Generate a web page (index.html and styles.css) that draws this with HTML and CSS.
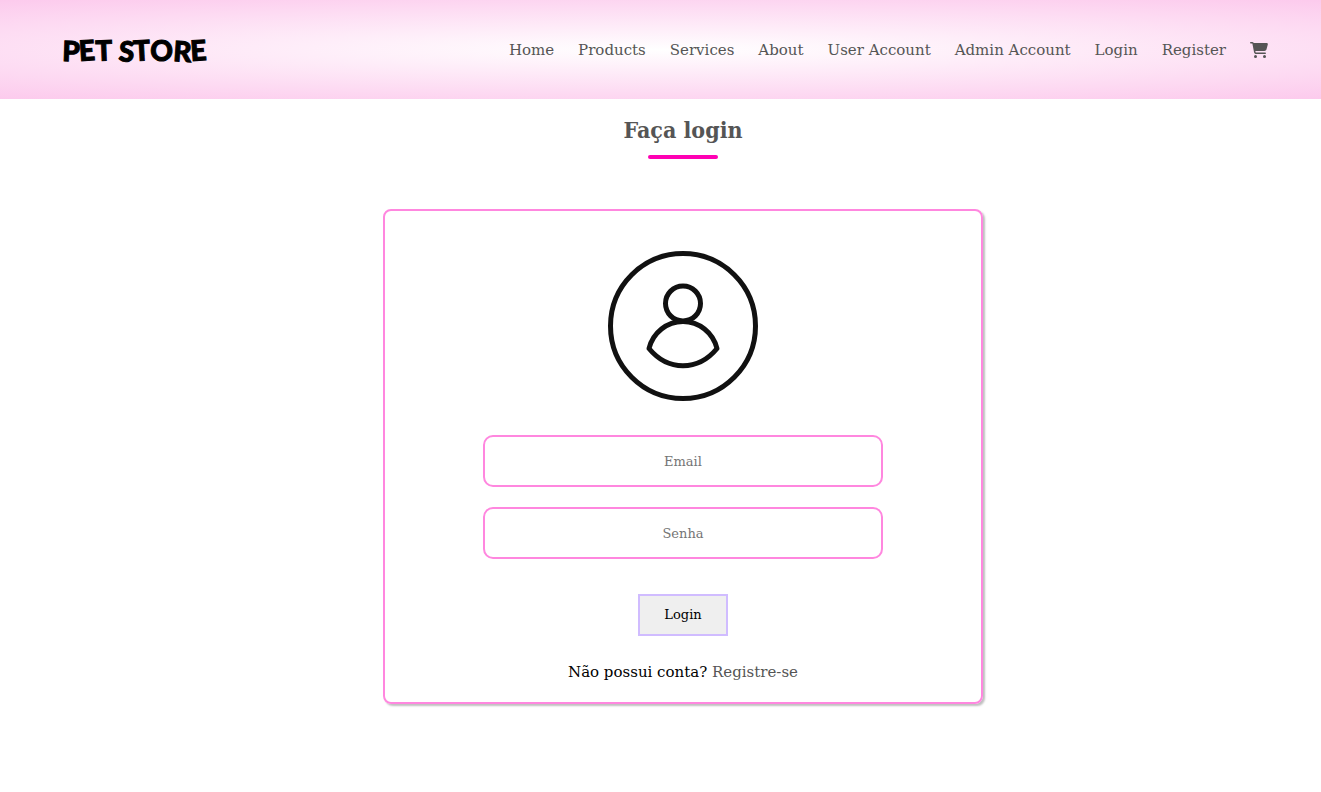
FILE: index.html
```html
<!DOCTYPE html>
<html lang="pt-BR">
<head>
<meta charset="utf-8">
<meta name="viewport" content="width=device-width, initial-scale=1">
<title>Pet Store</title>
<link rel="stylesheet" href="styles.css">
</head>
<body>
<header class="header">
  <a class="logo" href="#" aria-label="PET STORE">
    <svg width="150" height="40" viewBox="0 0 150 40" aria-hidden="true">
      <text class="logo-text" x="1" y="31" rotate="2 -4 -2 0 4 -3 0 4 -4">PET STORE</text>
    </svg>
  </a>
  <nav class="nav">
    <a href="#">Home</a>
    <a href="#">Products</a>
    <a href="#">Services</a>
    <a href="#">About</a>
    <a href="#">User Account</a>
    <a href="#">Admin Account</a>
    <a href="#">Login</a>
    <a href="#">Register</a>
    <a class="cart" href="#" aria-label="Cart">
      <svg width="18" height="16" viewBox="0 0 576 512" aria-hidden="true"><path fill="currentColor" d="M0 24C0 10.700 10.700 0 24 0H69.500c22 0 41.500 12.800 50.600 32h411c26.300 0 45.500 25 38.600 50.400l-41 152.300c-8.500 31.400-37 53.300-69.500 53.300H170.700l5.400 28.500c2.200 11.300 12.100 19.500 23.600 19.500H488c13.300 0 24 10.700 24 24s-10.700 24-24 24H199.700c-34.600 0-64.300-24.600-70.700-58.500L77.400 54.500c-.7-3.800-4-6.500-7.900-6.500H24C10.700 48 0 37.300 0 24zM128 464a48 48 0 1 1 96 0 48 48 0 1 1-96 0zm336-48a48 48 0 1 1 0 96 48 48 0 1 1 0-96z"/></svg>
    </a>
  </nav>
</header>
<main class="main">
  <h1 class="title">Faça login</h1>
  <form class="card">
    <svg class="avatar" width="150" height="150" viewBox="0 0 150 150" fill="none" stroke="#111" stroke-width="5" stroke-linejoin="round" aria-hidden="true">
      <circle cx="75" cy="75" r="72.500"/>
      <circle cx="75" cy="52.500" r="17.500"/>
      <path d="M41 97.500C45 81.500 59 70.500 75 70.500S105 81.500 109 97.500C90 120.500 60 120.500 41 97.500Z"/>
    </svg>
    <div class="fields">
      <input class="field" type="email" placeholder="Email" aria-label="Email">
      <input class="field" type="password" placeholder="Senha" aria-label="Senha">
    </div>
    <button class="submit" type="button">Login</button>
    <p class="signup">Não possui conta? <a href="#">Registre-se</a></p>
  </form>
</main>
</body>
</html>
```
FILE: styles.css
```css
* {
  box-sizing: border-box;
  margin: 0;
  padding: 0;
}

body {
  font-family: "Roboto Slab", "DejaVu Serif", serif;
  font-size: 15px;
  line-height: 20px;
  color: #000;
  background: #fff;
}

a {
  color: #555;
  text-decoration: none;
}

.header {
  display: flex;
  align-items: center;
  justify-content: space-between;
  min-height: 99px;
  padding: 0 53px 0 61px;
  background: radial-gradient(85% 66%, #fff, #fcc8ec);
}

.logo {
  display: flex;
}

.logo-text {
  font-family: Lato, sans-serif;
  font-size: 28px;
  font-weight: 900;
  stroke: #000;
  stroke-width: 1px;
}

.nav {
  display: flex;
  align-items: center;
  gap: 24px;
}

.cart {
  display: flex;
}

.main {
  display: flex;
  flex-direction: column;
  align-items: center;
  gap: 50px;
  padding: 16px 0 40px 45px;
}

.title {
  display: flex;
  flex-direction: column;
  align-items: center;
  gap: 10px;
  font-family: "Roboto Slab", "DejaVu Serif Condensed", "DejaVu Serif", serif;
  font-size: 23px;
  line-height: 30px;
  color: #555;
}

.title::after {
  content: "";
  width: 70px;
  height: 4px;
  border-radius: 2px;
  background: #ff00b3;
}

.card {
  display: flex;
  flex-direction: column;
  align-items: center;
  width: 100%;
  max-width: 600px;
  padding: 40px 20px 20px;
  border: 2px solid #ff87df;
  border-radius: 8px;
  box-shadow: 2px 2px 2px rgba(0, 0, 0, 0.25);
}

.fields {
  display: grid;
  gap: 20px;
  width: 100%;
  max-width: 400px;
  margin: 34px 0 35px;
}

.field {
  width: 100%;
  height: 52px;
  border: 2px solid #ff87df;
  border-radius: 10px;
  background: #fff;
  font: inherit;
  font-size: 13px;
  text-align: center;
}

.field::placeholder {
  color: #757575;
}

.submit {
  padding: 9px 24px;
  min-width: 90px;
  border: 2px solid #d0bcff;
  background: #efefef;
  color: #000;
  font: inherit;
  font-size: 13px;
}

.signup {
  margin-top: 26px;
}
```
